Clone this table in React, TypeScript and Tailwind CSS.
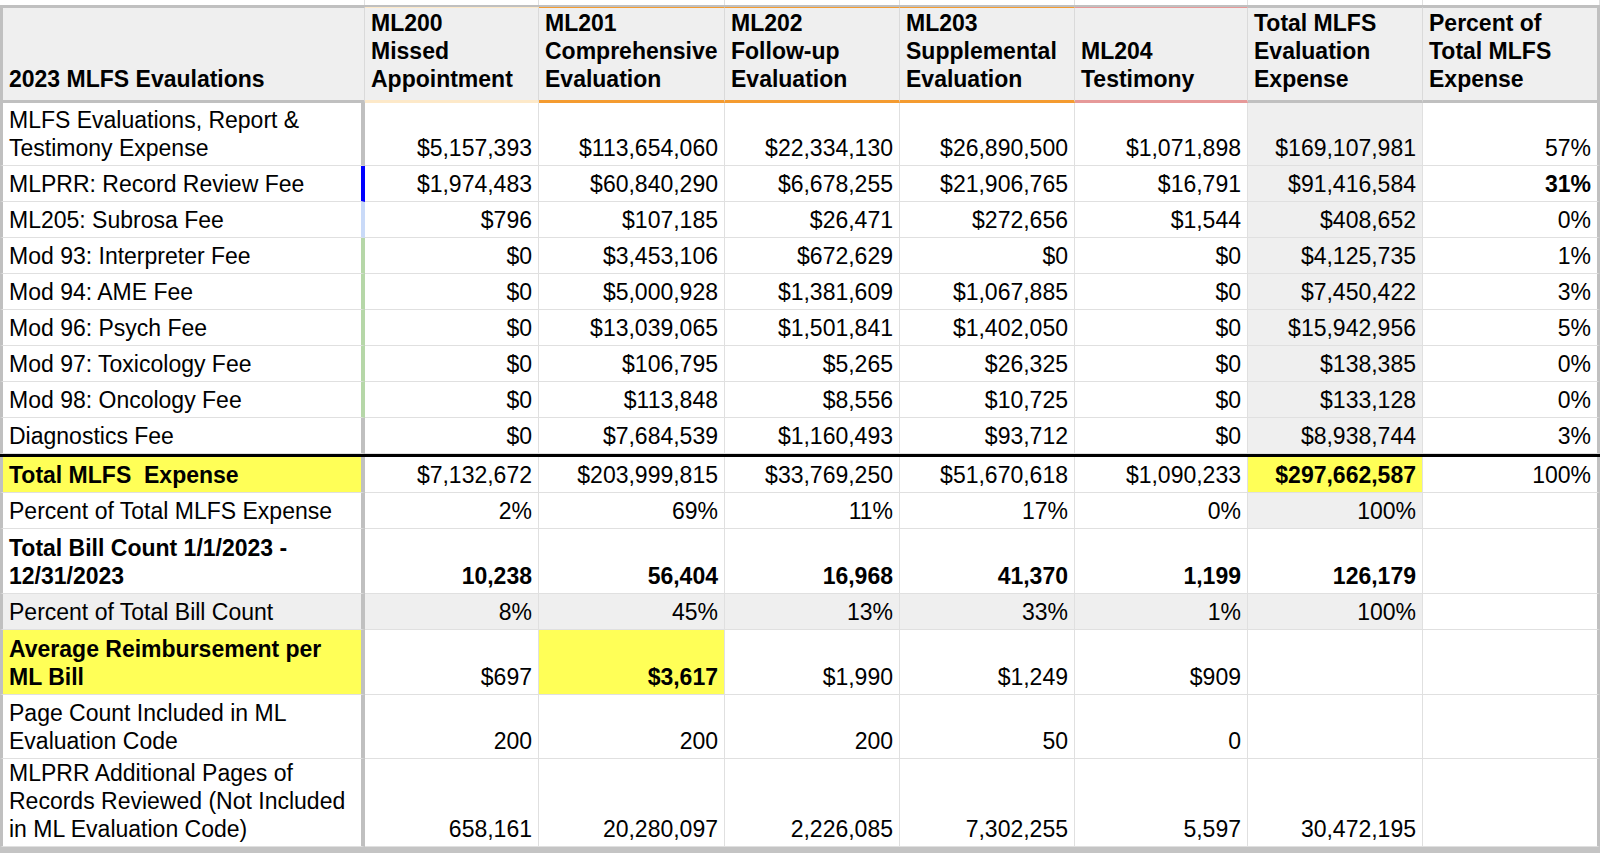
import type { ReactNode } from 'react'

// Column tracks shared by every row of the sheet
const GRID = 'grid grid-cols-[365px_174px_186px_175px_175px_173px_175px_177px]'

type Row = {
  label: string[]
  values: string[]
  h: string
  edge: string
  labelBold?: boolean
  labelYellow?: boolean
  rowGray?: boolean
  totalGray?: boolean
  totalYellow?: boolean
  bold?: number[]
  yellow?: number[]
}

const TOP_ROWS: Row[] = [
  {
    label: ['MLFS Evaluations, Report &', 'Testimony Expense'],
    values: ['$5,157,393', '$113,654,060', '$22,334,130', '$26,890,500', '$1,071,898', '$169,107,981', '57%'],
    h: 'h-[63px]',
    edge: 'border-r-[#c0c0c0]',
    totalGray: true,
  },
  {
    label: ['MLPRR: Record Review Fee'],
    values: ['$1,974,483', '$60,840,290', '$6,678,255', '$21,906,765', '$16,791', '$91,416,584', '31%'],
    h: 'h-[36px]',
    edge: 'border-r-[#0000ff]',
    totalGray: true,
    bold: [7],
  },
  {
    label: ['ML205: Subrosa Fee'],
    values: ['$796', '$107,185', '$26,471', '$272,656', '$1,544', '$408,652', '0%'],
    h: 'h-[36px]',
    edge: 'border-r-[#c9daf8]',
    totalGray: true,
  },
  {
    label: ['Mod 93: Interpreter Fee'],
    values: ['$0', '$3,453,106', '$672,629', '$0', '$0', '$4,125,735', '1%'],
    h: 'h-[36px]',
    edge: 'border-r-[#b6d7a8]',
    totalGray: true,
  },
  {
    label: ['Mod 94: AME Fee'],
    values: ['$0', '$5,000,928', '$1,381,609', '$1,067,885', '$0', '$7,450,422', '3%'],
    h: 'h-[36px]',
    edge: 'border-r-[#b6d7a8]',
    totalGray: true,
  },
  {
    label: ['Mod 96: Psych Fee'],
    values: ['$0', '$13,039,065', '$1,501,841', '$1,402,050', '$0', '$15,942,956', '5%'],
    h: 'h-[36px]',
    edge: 'border-r-[#b6d7a8]',
    totalGray: true,
  },
  {
    label: ['Mod 97: Toxicology Fee'],
    values: ['$0', '$106,795', '$5,265', '$26,325', '$0', '$138,385', '0%'],
    h: 'h-[36px]',
    edge: 'border-r-[#b6d7a8]',
    totalGray: true,
  },
  {
    label: ['Mod 98: Oncology Fee'],
    values: ['$0', '$113,848', '$8,556', '$10,725', '$0', '$133,128', '0%'],
    h: 'h-[36px]',
    edge: 'border-r-[#b6d7a8]',
    totalGray: true,
  },
  {
    label: ['Diagnostics Fee'],
    values: ['$0', '$7,684,539', '$1,160,493', '$93,712', '$0', '$8,938,744', '3%'],
    h: 'h-[36px]',
    edge: 'border-r-[#c0c0c0]',
    totalGray: true,
  },
]

const BOTTOM_ROWS: Row[] = [
  {
    label: ['Total MLFS\u00a0 Expense'],
    values: ['$7,132,672', '$203,999,815', '$33,769,250', '$51,670,618', '$1,090,233', '$297,662,587', '100%'],
    h: 'h-[36px]',
    edge: 'border-r-[#c0c0c0]',
    labelBold: true,
    labelYellow: true,
    totalYellow: true,
    bold: [6],
  },
  {
    label: ['Percent of Total MLFS Expense'],
    values: ['2%', '69%', '11%', '17%', '0%', '100%', ''],
    h: 'h-[36px]',
    edge: 'border-r-[#c0c0c0]',
    totalGray: true,
  },
  {
    label: ['Total Bill Count 1/1/2023 -', '12/31/2023'],
    values: ['10,238', '56,404', '16,968', '41,370', '1,199', '126,179', ''],
    h: 'h-[65px]',
    edge: 'border-r-[#c0c0c0]',
    labelBold: true,
    bold: [1, 2, 3, 4, 5, 6],
  },
  {
    label: ['Percent of Total Bill Count'],
    values: ['8%', '45%', '13%', '33%', '1%', '100%', ''],
    h: 'h-[36px]',
    edge: 'border-r-[#c0c0c0]',
    rowGray: true,
  },
  {
    label: ['Average Reimbursement per', 'ML Bill'],
    values: ['$697', '$3,617', '$1,990', '$1,249', '$909', '', ''],
    h: 'h-[65px]',
    edge: 'border-r-[#c0c0c0]',
    labelBold: true,
    labelYellow: true,
    bold: [2],
    yellow: [2],
  },
  {
    label: ['Page Count Included in ML', 'Evaluation Code'],
    values: ['200', '200', '200', '50', '0', '', ''],
    h: 'h-[64px]',
    edge: 'border-r-[#c0c0c0]',
  },
  {
    label: ['MLPRR Additional Pages of', 'Records Reviewed (Not Included', 'in ML Evaluation Code)'],
    values: ['658,161', '20,280,097', '2,226,085', '7,302,255', '5,597', '30,472,195', ''],
    h: 'h-[88px]',
    edge: 'border-r-[#c0c0c0]',
  },
]

const HEADERS: { lines: string[]; top: string; bottom: string }[] = [
  { lines: ['ML200', 'Missed', 'Appointment'], top: 'border-t-[#fde9c9]', bottom: 'border-b-[#fde9c9]' },
  { lines: ['ML201', 'Comprehensive', 'Evaluation'], top: 'border-t-[#f49b30]', bottom: 'border-b-[#f49b30]' },
  { lines: ['ML202', 'Follow-up', 'Evaluation'], top: 'border-t-[#f49b30]', bottom: 'border-b-[#f49b30]' },
  { lines: ['ML203', 'Supplemental', 'Evaluation'], top: 'border-t-[#f49b30]', bottom: 'border-b-[#f49b30]' },
  { lines: ['ML204', 'Testimony'], top: 'border-t-[#e69999]', bottom: 'border-b-[#e69999]' },
  { lines: ['Total MLFS', 'Evaluation', 'Expense'], top: 'border-t-[#c0c0c0]', bottom: 'border-b-[#c0c0c0]' },
  { lines: ['Percent of', 'Total MLFS', 'Expense'], top: 'border-t-[#c0c0c0]', bottom: 'border-b-[#c0c0c0]' },
]

function Lines({ lines }: { lines: string[] }) {
  return (
    <div className="whitespace-nowrap">
      {lines.map((l, i) => (
        <div key={i}>{l}</div>
      ))}
    </div>
  )
}

// Right border width/colour is passed in by the caller, so nothing fights over it
function Cell({ children, className = '' }: { children?: ReactNode; className?: string }) {
  return (
    <div className={`flex items-end px-[6px] pb-[3px] border-b border-b-[#e0e0e0] ${className}`}>
      {children}
    </div>
  )
}

function SheetRow({ row }: { row: Row }) {
  return (
    <div className={`${GRID} ${row.h}`}>
      <Cell
        className={`border-l-[3px] border-l-[#c0c0c0] border-r-[4px] ${row.edge} ${
          row.labelYellow ? 'bg-[#ffff57]' : row.rowGray ? 'bg-[#efefef]' : 'bg-white'
        } ${row.labelBold ? 'font-bold' : ''}`}
      >
        <Lines lines={row.label} />
      </Cell>
      {row.values.map((v, i) => {
        const col = i + 1
        const isTotal = col === 6
        const yellow = (isTotal && row.totalYellow) || row.yellow?.includes(col)
        const gray = (isTotal && row.totalGray) || (row.rowGray && col <= 6)
        return (
          <Cell
            key={i}
            className={`justify-end text-right ${
              col === 7 ? 'border-r-[3px] border-r-[#c0c0c0]' : 'border-r border-r-[#e0e0e0]'
            } ${yellow ? 'bg-[#ffff57]' : gray ? 'bg-[#efefef]' : 'bg-white'} ${
              row.bold?.includes(col) ? 'font-bold' : ''
            }`}
          >
            {v}
          </Cell>
        )
      })}
    </div>
  )
}

export default function App() {
  return (
    <div className="w-[1600px] h-[853px] overflow-hidden bg-white text-black text-[23px] leading-[28px] font-['Liberation_Sans',Arial,sans-serif]">
      {/* Sliver of the row above */}
      <div className={`${GRID} h-[5px]`}>
        {Array.from({ length: 8 }).map((_, i) => (
          <div key={i} className="border-r border-r-[#e0e0e0]" />
        ))}
      </div>
      <div className="h-[2px] bg-[#c0c0c0]" />

      {/* Header */}
      <div className={`${GRID} h-[96px] bg-[#efefef] font-bold`}>
        <div className="flex items-end px-[6px] pb-[7px] border-l-[3px] border-l-[#c0c0c0] border-t border-t-[#c0c0c0] border-b-[3px] border-b-[#c0c0c0] border-r border-r-[#dadada]">
          2023 MLFS Evaulations
        </div>
        {HEADERS.map((hd, i) => (
          <div
            key={i}
            className={`flex items-end px-[6px] pb-[7px] border-t border-b-[3px] ${hd.top} ${hd.bottom} ${
              i === 6 ? 'border-r-[3px] border-r-[#c0c0c0]' : 'border-r border-r-[#dadada]'
            }`}
          >
            <Lines lines={hd.lines} />
          </div>
        ))}
      </div>

      {TOP_ROWS.map((r, i) => (
        <SheetRow key={i} row={r} />
      ))}

      <div className="h-[3px] bg-black" />

      {BOTTOM_ROWS.map((r, i) => (
        <SheetRow key={i} row={r} />
      ))}

      <div className="h-[6px] bg-[#c4c4c4]" />
    </div>
  )
}
